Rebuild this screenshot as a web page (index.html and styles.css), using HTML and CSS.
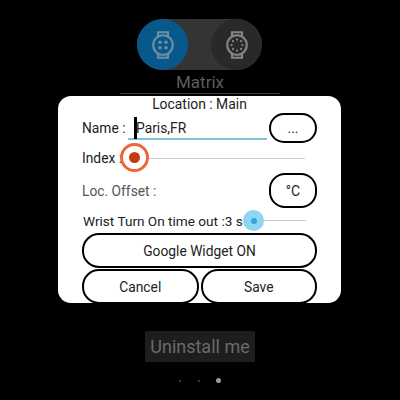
FILE: index.html
```
<!DOCTYPE html>
<html>
<head>
<meta charset="utf-8">
<title>Matrix</title>
<link rel="stylesheet" href="styles.css">
</head>
<body>
<main class="screen">
  <div class="toggle">
    <div class="knob knob-on">
      <svg class="watch" viewBox="0 0 24 24" width="30" height="30" fill="none" stroke="#6f8ea2" stroke-width="1.7">
        <circle cx="12" cy="12" r="7.8"/><path d="M8 5V1.8h8V5M8 19v3.2h8V19"/>
        <g fill="#6f8ea2" stroke="none"><circle cx="9.6" cy="9.8" r="1.4"/><circle cx="14.4" cy="9.8" r="1.4"/><circle cx="9.6" cy="14.2" r="1.4"/><circle cx="14.4" cy="14.2" r="1.4"/></g>
      </svg>
    </div>
    <div class="knob knob-off">
      <svg class="watch" viewBox="0 0 24 24" width="30" height="30" fill="none" stroke="#858585" stroke-width="1.7">
        <circle cx="12" cy="12" r="7.8"/><path d="M8 5V1.8h8V5M8 19v3.2h8V19"/>
        <g fill="#858585" stroke="none"><circle cx="12" cy="7.6" r=".9"/><circle cx="15.2" cy="8.9" r=".9"/><circle cx="16.4" cy="12" r=".9"/><circle cx="15.2" cy="15.1" r=".9"/><circle cx="12" cy="16.4" r=".9"/><circle cx="8.8" cy="15.1" r=".9"/><circle cx="7.6" cy="12" r=".9"/><circle cx="8.8" cy="8.9" r=".9"/></g>
      </svg>
    </div>
  </div>
  <div class="title">Matrix</div>
  <div class="rule"></div>
  <div class="uninstall">Uninstall me</div>
  <div class="dots"><span class="dot"></span><span class="dot"></span><span class="dot dot-on"></span></div>

  <section class="dialog">
    <div class="heading">Location : Main</div>
    <div class="row row-name">
      <span class="label label-name">Name :</span>
      <div class="input"><span class="caret"></span><span>Paris,FR</span></div>
      <div class="btn btn-small btn-dots">...</div>
    </div>
    <div class="row row-index">
      <span class="label">Index :</span>
      <div class="slider"><span class="thumb-orange"><span class="thumb-core"></span></span></div>
    </div>
    <div class="row row-offset">
      <span class="label label-dim">Loc. Offset :</span>
      <div class="btn btn-small btn-tall">°C</div>
    </div>
    <div class="row row-wrist">
      <span class="label label-wrist">Wrist Turn On time out :3 s</span>
      <div class="slider slider-short"><span class="thumb-blue"><span class="thumb-blue-core"></span></span></div>
    </div>
    <div class="btn btn-wide">Google Widget ON</div>
    <div class="actions">
      <div class="btn btn-action">Cancel</div>
      <div class="btn btn-action">Save</div>
    </div>
  </section>
</main>
</body>
</html>
```
FILE: styles.css
```
* { box-sizing: border-box; }
html, body { margin: 0; height: 100%; background: #000; }
body { font-family: Roboto, "Liberation Sans", sans-serif; overflow: hidden; }
.screen { position: relative; width: 400px; height: 400px; display: flex; flex-direction: column; align-items: center; padding-top: 19px; }
.toggle { width: 125px; height: 51px; margin-left: -1px; border-radius: 26px; background: #343434; display: flex; justify-content: space-between; }
.knob { width: 51px; height: 51px; border-radius: 50%; display: flex; align-items: center; justify-content: center; }
.knob-on { background: #07598c; }
.knob-off { background: #27292a; }
.title { margin-top: 2px; height: 21px; line-height: 21px; font-size: 17px; color: #5c5c5c; }
.rule { width: 160px; height: 1px; background: #3a3a3a; }
.uninstall { margin-top: 237px; width: 110px; height: 31px; line-height: 32px; text-align: center; background: #1e1e1e; color: #6b6b6b; font-size: 18px; }
.dots { margin-top: 16px; display: flex; gap: 17px; align-items: center; }
.dot { width: 2px; height: 2px; border-radius: 50%; background: #4a4a4a; }
.dot-on { width: 5px; height: 5px; margin-left: -1px; background: #9a9a9a; }

.dialog { position: absolute; left: 58px; top: 96px; width: 283px; height: 207px; background: #fff; border-radius: 13px; overflow: hidden; padding: 0 24px; color: #222; font-size: 14px; }
.heading { height: 16px; line-height: 16px; text-align: center; color: #1c1c1c; font-size: 13.9px; }
.row { display: flex; align-items: center; position: relative; }
.label { white-space: nowrap; font-size: 13.8px; }
.label-dim { color: #555; }
.label-name { width: 46px; }
.row-name { height: 30px; margin-top: 1px; }
.input { width: 139px; height: 25px; align-self: flex-start; margin-top: 2px; padding: 3px 0 0 6px; display: flex; align-items: center; border-bottom: 2px solid #7fc4d2; font-size: 13.8px; }
.caret { width: 3px; height: 22px; margin-right: -1px; background: #000; }
.btn-dots { margin-left: 2px; color: #777; }
.row-index { height: 30px; }
.slider { position: absolute; left: 40px; width: 183px; height: 1px; background: #ccc; }
.thumb-orange { position: absolute; left: -2px; top: -15px; width: 29px; height: 29px; border-radius: 50%; background: #fff; border: 3px solid #ef6539; display: flex; align-items: center; justify-content: center; }
.thumb-core { width: 11px; height: 11px; border-radius: 50%; background: #c23a12; }
.row-offset { height: 35px; justify-content: space-between; }
.row-wrist { height: 25px; margin-left: 1px; }
.label-wrist { font-size: 13.6px; }
.slider-short { left: 164px; width: 59px; }
.thumb-blue { position: absolute; left: -4px; top: -10px; width: 21px; height: 21px; border-radius: 50%; background: #8fd6f2; display: flex; align-items: center; justify-content: center; }
.thumb-blue-core { width: 6px; height: 6px; border-radius: 50%; background: #3aa0d8; }
.btn { border: 2px solid #000; background: #fff; display: flex; align-items: center; justify-content: center; color: #222; font-size: 13.8px; }
.btn-small { width: 48px; height: 30px; border-radius: 15px; }
.btn-tall { height: 35px; border-radius: 16px; font-size: 14px; }
.btn-wide { width: 235px; height: 35px; border-radius: 17px; }
.actions { display: flex; gap: 2px; margin-top: 1px; }
.btn-action { width: 116.5px; height: 35px; border-radius: 17px; }
```
